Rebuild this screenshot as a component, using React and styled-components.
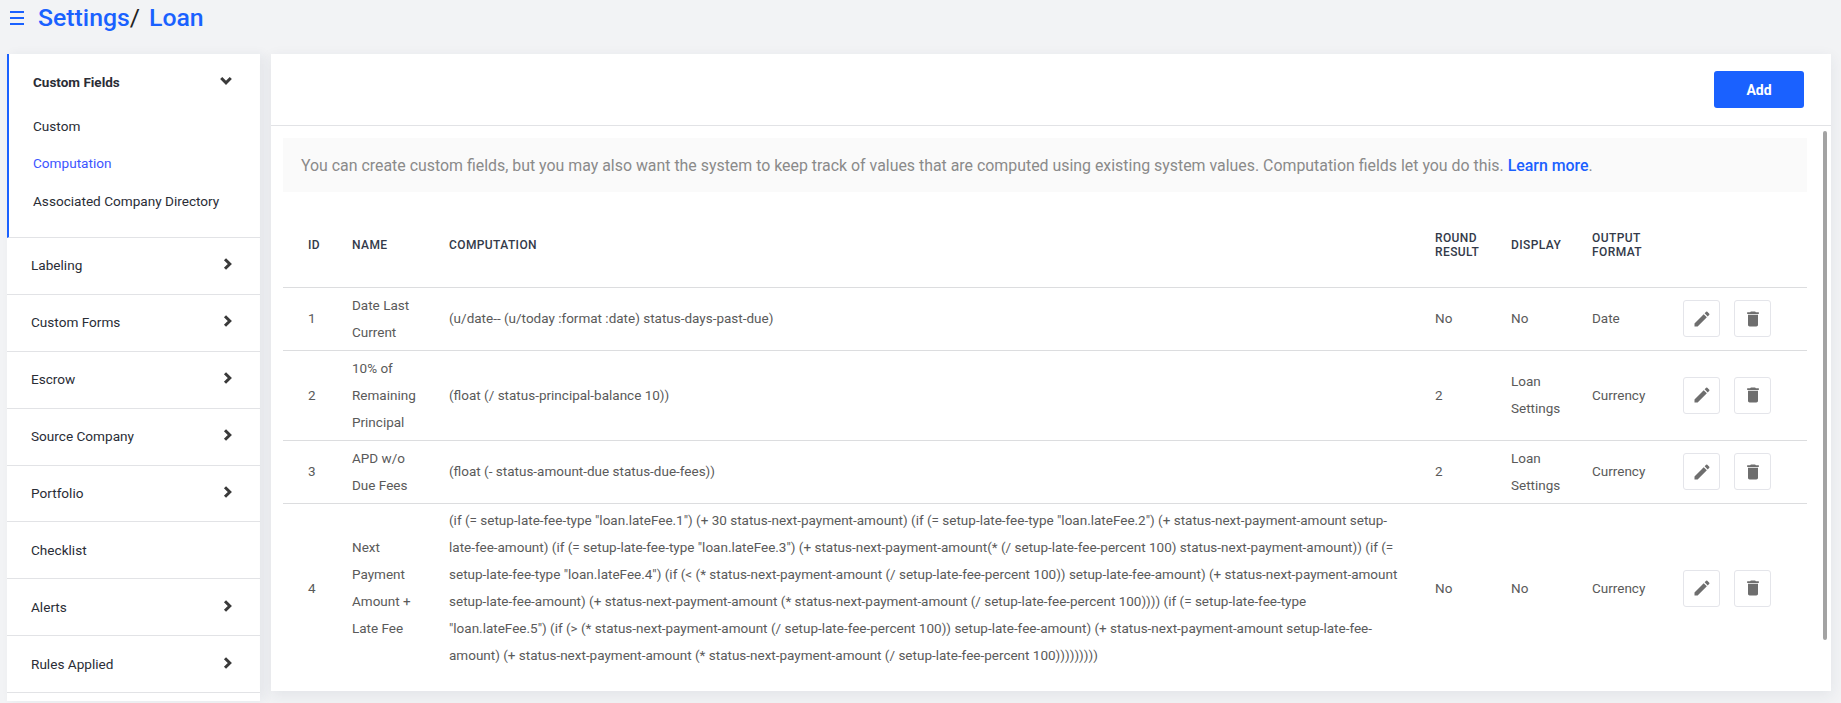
import React from "react";
import styled, { createGlobalStyle } from "styled-components";
import { MdEdit, MdDelete } from "react-icons/md";

const GlobalStyle = createGlobalStyle`
  html, body {
    margin: 0;
    height: 100%;
    overflow: hidden;
    background: #f2f3f5;
    font-family: Roboto, "Liberation Sans", sans-serif;
  }
  * { box-sizing: border-box; }
`;

const Page = styled.div`
  height: 703px;
  overflow: hidden;
`;

const TopBar = styled.header`
  height: 54px;
  padding: 0 0 19px 10px;
  display: flex;
  align-items: center;
`;

const Burger = styled.svg`
  width: 14px;
  height: 14px;
  margin-right: 14px;
`;

const Crumb = styled.span`
  font-size: 24.8px;
  font-weight: ${({ $dark }) => ($dark ? 400 : 500)};
  color: ${({ $dark }) => ($dark ? "#222" : "#1a61ff")};
  margin-right: ${({ $gap }) => $gap || "0"};
`;

const Columns = styled.div`
  display: flex;
  align-items: flex-start;
  padding-left: 7px;
  gap: 11px;
`;

const Sidebar = styled.aside`
  width: 253px;
  height: 647px;
  flex: none;
  background: #fff;
  overflow: hidden;
  box-shadow: 4px 0 10px rgba(40, 50, 80, 0.06);
`;

const OpenSection = styled.div`
  height: 184px;
  border-left: 2px solid #1a61ff;
  border-bottom: 1px solid #e2e3e6;
  padding: 0 28px 0 24px;
`;

const OpenHead = styled.div`
  height: 53px;
  padding-top: 3px;
  display: flex;
  align-items: center;
  justify-content: space-between;
  font-size: 13.5px;
  font-weight: 700;
  color: #2a2d36;
`;

const SubLink = styled.div`
  height: 37.5px;
  display: flex;
  align-items: center;
  font-size: 13.6px;
  color: ${({ $active }) => ($active ? "#3d55ff" : "#2a2d36")};
`;

const Row = styled.div`
  height: 56.9px;
  padding: 0 28px 1px 24px;
  border-bottom: 1px solid #e2e3e6;
  display: flex;
  align-items: center;
  justify-content: space-between;
  font-size: 13.6px;
  color: #2a2d36;
`;

const ChevronIcon = styled.svg`
  width: ${({ $down }) => ($down ? "12px" : "9px")};
  height: ${({ $down }) => ($down ? "9px" : "12px")};
  margin-top: ${({ $down }) => ($down ? "-3px" : "-2px")};
  flex: none;
`;

const Chevron = ({ down }) =>
  down ? (
    <ChevronIcon $down viewBox="0 0 12 9">
      <path d="M1.2 2 6 6.8 10.8 2" stroke="#3a3a3a" strokeWidth="3" fill="none" />
    </ChevronIcon>
  ) : (
    <ChevronIcon viewBox="0 0 9 12">
      <path d="M2 1.2 6.8 6 2 10.8" stroke="#3a3a3a" strokeWidth="3" fill="none" />
    </ChevronIcon>
  );

const Panel = styled.main`
  width: 1560px;
  height: 637px;
  flex: none;
  background: #fff;
  position: relative;
  box-shadow: 0 4px 14px rgba(40, 50, 80, 0.08);
`;

const PanelHead = styled.div`
  height: 72px;
  border-bottom: 1px solid #e2e3e6;
  padding: 17px 27px 0 0;
  display: flex;
  justify-content: flex-end;
  align-items: flex-start;
`;

const AddButton = styled.button`
  width: 90px;
  height: 37px;
  border: 0;
  border-radius: 3px;
  background: #1a61ff;
  color: #fff;
  font-family: inherit;
  font-size: 14px;
  font-weight: 700;
`;

const Thumb = styled.div`
  position: absolute;
  top: 77px;
  right: 4px;
  width: 4px;
  height: 509px;
  border-radius: 2px;
  background: #a3a3a3;
`;

const Body = styled.div`
  padding: 12px 24px 0 12px;
`;

const Notice = styled.div`
  height: 54px;
  background: #fafafa;
  padding-left: 18px;
  display: flex;
  align-items: center;
  font-size: 15.9px;
  color: #8a8a8a;
  white-space: pre;
`;

const LearnMore = styled.a`
  color: #1a61ff;
  font-weight: 500;
`;

const Table = styled.table`
  width: 1524px;
  table-layout: fixed;
  border-collapse: collapse;
  font-size: 13.5px;
  color: #5a5a5a;
`;

const Th = styled.th`
  height: 95px;
  padding: 12px 10px 0 0;
  text-align: left;
  font-size: 12px;
  font-weight: 500;
  line-height: 14px;
  letter-spacing: 0.4px;
  text-transform: uppercase;
  color: #333a49;
  border-bottom: 1px solid #dcdddf;
  &:first-child { padding-left: 25px; }
`;

const Td = styled.td`
  padding: 0 ${({ $pad }) => $pad || "10px"} 0 0;
  line-height: 27px;
  vertical-align: middle;
  &:first-child { padding-left: 25px; }
`;

const Tr = styled.tr`
  height: ${({ $h }) => $h};
  &:not(:last-child) td { border-bottom: 1px solid #dcdddf; }
`;

const Actions = styled.div`
  display: flex;
  gap: 14px;
`;

const IconButton = styled.button`
  width: 37px;
  height: 37px;
  padding: 0;
  border: 1px solid #e4e5ea;
  border-radius: 3px;
  background: #fff;
  color: #6e6e6e;
  font-size: 20px;
  display: flex;
  align-items: center;
  justify-content: center;
`;

const menu = [
  ["Labeling", true],
  ["Custom Forms", true],
  ["Escrow", true],
  ["Source Company", true],
  ["Portfolio", true],
  ["Checklist", false],
  ["Alerts", true],
  ["Rules Applied", true],
];

const longFormula =
  '(if (= setup-late-fee-type "loan.lateFee.1") (+ 30 status-next-payment-amount) (if (= setup-late-fee-type "loan.lateFee.2") (+ status-next-payment-amount setup-late-fee-amount) (if (= setup-late-fee-type "loan.lateFee.3") (+ status-next-payment-amount(* (/ setup-late-fee-percent 100) status-next-payment-amount)) (if (= setup-late-fee-type "loan.lateFee.4") (if (< (* status-next-payment-amount (/ setup-late-fee-percent 100)) setup-late-fee-amount) (+ status-next-payment-amount setup-late-fee-amount) (+ status-next-payment-amount (* status-next-payment-amount (/ setup-late-fee-percent 100)))) (if (= setup-late-fee-type "loan.lateFee.5") (if (> (* status-next-payment-amount (/ setup-late-fee-percent 100)) setup-late-fee-amount) (+ status-next-payment-amount setup-late-fee-amount) (+ status-next-payment-amount (* status-next-payment-amount (/ setup-late-fee-percent 100)))))))))';

const rows = [
  { id: 1, h: "63px", name: "Date Last Current", formula: "(u/date-- (u/today :format :date) status-days-past-due)", round: "No", display: "No", format: "Date" },
  { id: 2, h: "90px", name: "10% of Remaining Principal", formula: "(float (/ status-principal-balance 10))", round: "2", display: "Loan Settings", format: "Currency" },
  { id: 3, h: "63px", name: "APD w/o Due Fees", formula: "(float (- status-amount-due status-due-fees))", round: "2", display: "Loan Settings", format: "Currency" },
  { id: 4, h: "170px", name: "Next Payment Amount + Late Fee", formula: longFormula, round: "No", display: "No", format: "Currency" },
];

export default function App() {
  return (
    <Page>
      <GlobalStyle />
      <TopBar>
        <Burger viewBox="0 0 14 14">
          <path d="M0 1h14M0 7h14M0 13h14" stroke="#1a61ff" strokeWidth="2" fill="none" />
        </Burger>
        <Crumb>Settings</Crumb>
        <Crumb $dark $gap="9px">/</Crumb>
        <Crumb>Loan</Crumb>
      </TopBar>
      <Columns>
        <Sidebar>
          <OpenSection>
            <OpenHead>
              Custom Fields
              <Chevron down />
            </OpenHead>
            <SubLink>Custom</SubLink>
            <SubLink $active>Computation</SubLink>
            <SubLink>Associated Company Directory</SubLink>
          </OpenSection>
          {menu.map(([label, hasArrow]) => (
            <Row key={label}>
              {label}
              {hasArrow && <Chevron />}
            </Row>
          ))}
        </Sidebar>
        <Panel>
          <PanelHead>
            <AddButton>Add</AddButton>
          </PanelHead>
          <Thumb />
          <Body>
            <Notice>
              You can create custom fields, but you may also want the system to keep track of values that are computed using existing system values. Computation fields let you do this. <LearnMore>Learn more</LearnMore>.
            </Notice>
            <Table>
              <colgroup>
                <col style={{ width: 69 }} />
                <col style={{ width: 97 }} />
                <col style={{ width: 986 }} />
                <col style={{ width: 76 }} />
                <col style={{ width: 81 }} />
                <col style={{ width: 91 }} />
                <col style={{ width: 124 }} />
              </colgroup>
              <thead>
                <tr>
                  <Th>ID</Th>
                  <Th>Name</Th>
                  <Th>Computation</Th>
                  <Th>Round Result</Th>
                  <Th>Display</Th>
                  <Th>Output Format</Th>
                  <Th />
                </tr>
              </thead>
              <tbody>
                {rows.map((r) => (
                  <Tr key={r.id} $h={r.h}>
                    <Td>{r.id}</Td>
                    <Td $pad="24px">{r.name}</Td>
                    <Td $pad="30px">{r.formula}</Td>
                    <Td>{r.round}</Td>
                    <Td>{r.display}</Td>
                    <Td>{r.format}</Td>
                    <Td>
                      <Actions>
                        <IconButton><MdEdit /></IconButton>
                        <IconButton><MdDelete /></IconButton>
                      </Actions>
                    </Td>
                  </Tr>
                ))}
              </tbody>
            </Table>
          </Body>
        </Panel>
      </Columns>
    </Page>
  );
}
